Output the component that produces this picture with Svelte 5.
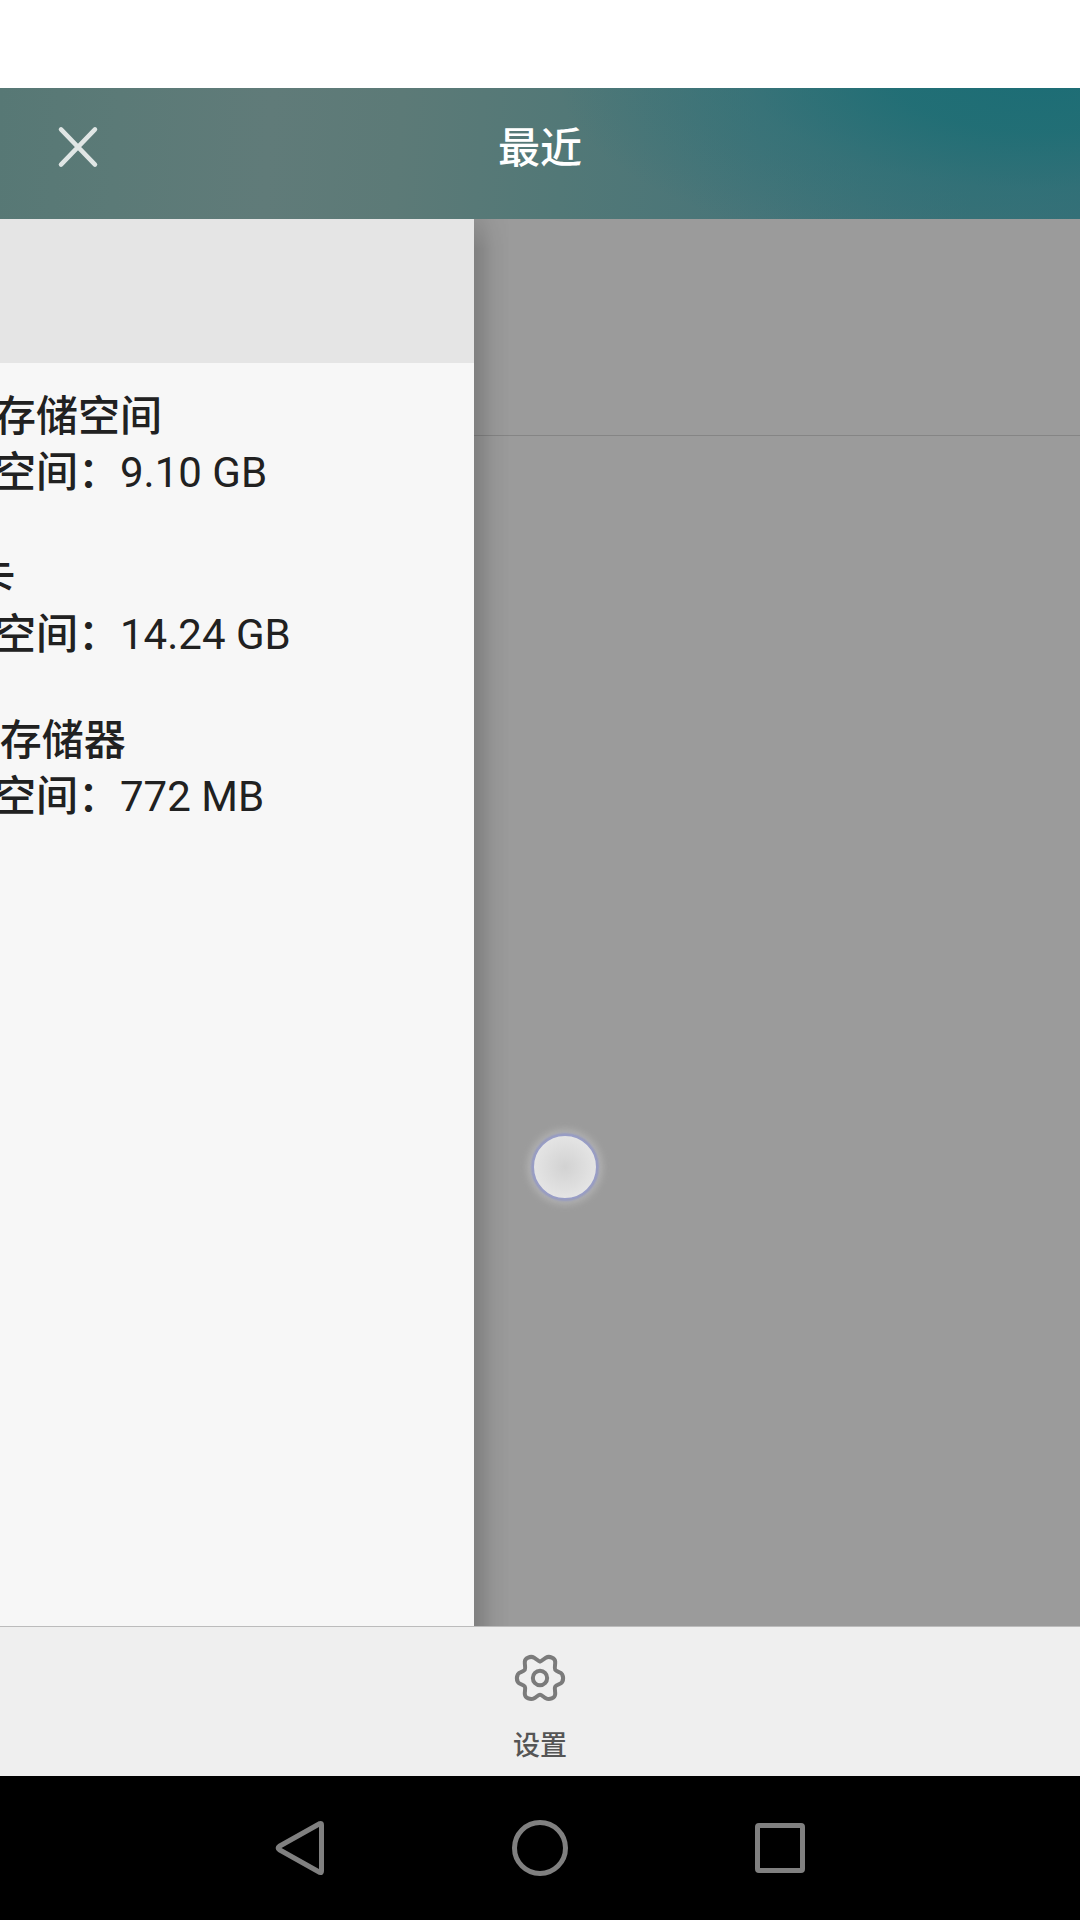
<script>
  const volumes = [
    { name: '内部存储空间', free: '9.10 GB' },
    { name: 'SD 卡', free: '14.24 GB' },
    { name: 'USB 存储器', free: '772 MB' }
  ];
</script>

<div class="screen">
  <div class="status"></div>
  <header>
    <button class="close" aria-label="关闭">
      <svg width="44" height="44" viewBox="0 0 44 44"><path d="M5 4.4 39 39.6M39 4.4 5 39.6" /></svg>
    </button>
    <h1>最近</h1>
    <span></span>
  </header>
  <main>
    <aside>
      <div class="spacer"></div>
      <ul>
        {#each volumes as v}
          <li>
            <div class="name">{v.name}</div>
            <div class="free"><span>可用空间：</span>{v.free}</div>
          </li>
        {/each}
      </ul>
    </aside>
    <section>
      <div class="tabs"></div>
      <div class="shade"></div>
    </section>
    <div class="touch"></div>
  </main>
  <footer>
    <svg width="54" height="52" viewBox="70.500 126 162 156" class="gear">
      <path d="M151.500 155C156 154 162 147 169 143C180 137 197 144 197 155C198 164 194 174 197 179C201 186 214 185 218 193C222 201 222 209 218 216C214 224 201 222 197 230C194 236 198 245 197 253C196 264 180 271 169 265C162 261 156 254 151.500 254C147 254 141 261 134 265C123 271 107 264 106 253C105 245 109 236 106 230C102 222 89 224 85 216C81 209 81 201 85 193C89 185 102 186 106 179C109 174 105 164 106 155C106 144 123 137 134 143C141 147 147 154 151.500 155Z" />
      <circle cx="151.500" cy="204" r="21.500" />
    </svg>
    <span>设置</span>
  </footer>
  <nav>
    <svg width="60" height="60" viewBox="0 0 60 60"><path d="M9.400 28.200 50 5.500Q51.500 5 51.500 7V53Q51.500 55 50 54.500L9.400 31.800Q6.900 30 9.400 28.200Z" /></svg>
    <svg width="60" height="60" viewBox="0 0 60 60"><circle cx="30" cy="30" r="25.500" /></svg>
    <svg width="60" height="60" viewBox="0 0 60 60"><rect x="7.500" y="7.500" width="45" height="45" rx="1.500" /></svg>
  </nav>
</div>

<style>
  :global(body) {
    margin: 0;
    background: #fff;
  }
  .screen {
    width: 1080px;
    height: 1920px;
    display: flex;
    flex-direction: column;
    overflow: hidden;
    font-family: Roboto, 'Noto Sans CJK SC', sans-serif;
    color: #212121;
  }
  .status {
    height: 88px;
    flex: none;
  }
  header {
    height: 131px;
    flex: none;
    box-sizing: border-box;
    padding: 0 56px 13px;
    display: grid;
    grid-template-columns: 100px 1fr 100px;
    align-items: center;
    background:
      radial-gradient(ellipse 480px 190px at 96% -10%, rgba(27, 109, 117, 0.95) 0%, rgba(29, 110, 117, 0.85) 30%, rgba(40, 112, 119, 0.5) 60%, rgba(58, 114, 120, 0) 100%),
      linear-gradient(94deg, #577875 0%, #5b7a77 11%, #607b79 25%, #5c7a77 37%, #527877 52%, #487579 70%, #3c7177 90%, #3a7078 100%);
  }
  .close {
    display: flex;
    padding: 0;
    border: 0;
    background: none;
  }
  svg {
    display: block;
    fill: none;
  }
  .close svg {
    stroke: #e0e6e5;
    stroke-width: 4.5;
    stroke-linecap: round;
  }
  h1 {
    margin: 0;
    padding-top: 3px;
    text-align: center;
    font-size: 42px;
    font-weight: 500;
    line-height: 60px;
    color: #fff;
  }
  main {
    position: relative;
    height: 1407px;
    flex: none;
    display: flex;
  }
  aside {
    width: 474px;
    flex: none;
    overflow: hidden;
    background: #f7f7f7;
  }
  .spacer {
    height: 144px;
    background: #e5e5e5;
  }
  ul {
    list-style: none;
    margin: 0 0 0 -90px;
    padding: 27px 0 0;
    display: flex;
    flex-direction: column;
    gap: 51px;
  }
  li {
    font-size: 42px;
    white-space: nowrap;
  }
  .name {
    line-height: 54px;
    font-weight: 500;
  }
  .free {
    line-height: 57px;
  }
  .free span {
    font-weight: 500;
  }
  section {
    position: relative;
    flex: 1;
    background: #9b9b9b;
  }
  .tabs {
    height: 216px;
    border-bottom: 1px solid #858585;
  }
  .shade {
    position: absolute;
    inset: 0 auto 0 0;
    width: 36px;
    background: linear-gradient(90deg, rgba(0, 0, 0, 0.17), rgba(0, 0, 0, 0.12) 25%, rgba(0, 0, 0, 0.04) 55%, transparent);
    mask-image: linear-gradient(rgba(0, 0, 0, 0.4), #000 30px);
  }
  .touch {
    position: absolute;
    left: 532px;
    top: 915px;
    width: 62px;
    height: 62px;
    border: 2px solid #989dc6;
    border-radius: 50%;
    background: radial-gradient(circle, #d2d2d2, #e4e4e4 70%);
    box-shadow: 0 0 2px 1px rgba(141, 147, 196, 0.8), 0 0 10px 3px rgba(205, 205, 205, 0.65);
  }
  footer {
    height: 150px;
    flex: none;
    box-sizing: border-box;
    border-top: 1px solid #bcbcbc;
    padding-top: 25px;
    display: flex;
    flex-direction: column;
    align-items: center;
    gap: 22px;
    background: #efefef;
  }
  .gear {
    stroke: #7b7b7b;
    stroke-width: 12;
    stroke-linejoin: round;
  }
  footer span {
    font-size: 27px;
    line-height: 40px;
    color: #555;
    font-weight: 500;
  }
  nav {
    flex: 1;
    display: flex;
    justify-content: center;
    align-items: center;
    gap: 180px;
    background: #000;
  }
  nav svg {
    stroke: #808080;
    stroke-width: 5;
    stroke-linejoin: round;
  }
</style>
